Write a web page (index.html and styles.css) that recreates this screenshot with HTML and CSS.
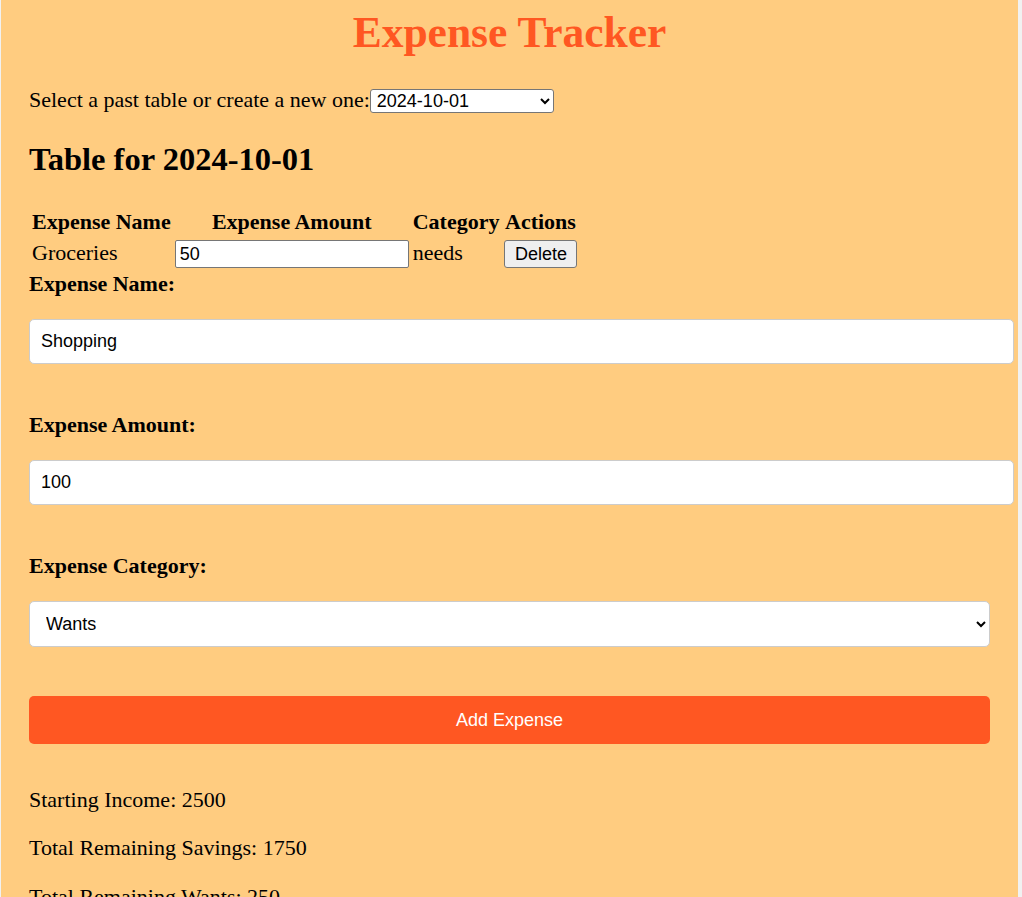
FILE: index.html
```html
<!DOCTYPE html>
<html lang="en">
<head>
<meta charset="utf-8">
<title>Expense Tracker</title>
<link rel="stylesheet" href="styles.css">
</head>
<body>
<h1 class="title">Expense Tracker</h1>
<div class="picker">
  <label class="picker-label" for="tableSelect">Select a past table or create a new one:</label>
  <select id="tableSelect" class="picker-select">
    <option>2024-10-01</option>
    <option>Create new table</option>
  </select>
</div>
<h2 class="table-title">Table for 2024-10-01</h2>
<table class="expense-table">
  <thead>
    <tr><th>Expense Name</th><th>Expense Amount</th><th>Category</th><th>Actions</th></tr>
  </thead>
  <tbody>
    <tr>
      <td>Groceries</td>
      <td><input class="amount-input" type="text" value="50"></td>
      <td>needs</td>
      <td><button class="delete-btn" type="button">Delete</button></td>
    </tr>
  </tbody>
</table>
<form class="expense-form">
  <label class="form-label" for="name">Expense Name:</label>
  <input class="form-input" id="name" type="text" value="Shopping">
  <label class="form-label" for="amount">Expense Amount:</label>
  <input class="form-input" id="amount" type="text" value="100">
  <label class="form-label" for="category">Expense Category:</label>
  <select class="form-select" id="category">
    <option>Wants</option>
    <option>Needs</option>
    <option>Savings</option>
  </select>
  <button class="add-btn" type="button">Add Expense</button>
</form>
<div class="summary">
  <p class="summary-line">Starting Income: 2500</p>
  <p class="summary-line">Total Remaining Savings: 1750</p>
  <p class="summary-line">Total Remaining Wants: 250</p>
</div>
</body>
</html>
```

FILE: styles.css
```css
html {
  background: #f1f1f1;
}

body {
  margin: 0 4px 0 1px;
  padding: 0 28px 40px;
  background: #ffcc80;
  font-family: "Liberation Serif", "Times New Roman", serif;
  font-size: 22px;
  line-height: 26px;
  color: #000;
}

.title {
  margin: 7.5px 0 0;
  font-size: 43.5px;
  line-height: 49px;
  font-weight: bold;
  text-align: center;
  color: #ff5722;
}

.picker {
  display: flex;
  align-items: baseline;
  margin-top: 30px;
}

.picker-select {
  width: 184px;
  height: 24px;
  padding: 0 2px;
  font-family: "Liberation Sans", Arial, sans-serif;
  font-size: 18px;
  color: #000;
  background: #fff;
  border: 1px solid #767676;
  border-radius: 3px;
}

.table-title {
  margin: 27px 0 0;
  font-size: 32.5px;
  line-height: 38px;
  font-weight: bold;
}

.expense-table {
  margin-top: 28px;
  border-spacing: 2px;
  font-size: 22px;
  line-height: 26px;
}

.expense-table th,
.expense-table td {
  padding: 1px;
  vertical-align: baseline;
}

.expense-table td {
  text-align: left;
  padding-top: 2px;
}

.amount-input {
  box-sizing: border-box;
  width: 234px;
  height: 28px;
  padding: 0 4px;
  font-family: "Liberation Sans", Arial, sans-serif;
  font-size: 18px;
  color: #000;
  background: #fff;
  border: 1px solid #767676;
  border-radius: 2px;
}

.delete-btn {
  box-sizing: border-box;
  height: 28px;
  width: 73px;
  padding: 0;
  margin-left: 1px;
  font-family: "Liberation Sans", Arial, sans-serif;
  font-size: 18px;
  color: #000;
  background: #efefef;
  border: 1px solid #767676;
  border-radius: 3px;
}

.expense-form {
  display: block;
  margin: 0;
}

.form-label {
  display: block;
  font-weight: bold;
  margin: 0 0 22px;
}

.form-input {
  display: block;
  width: 100%;
  height: 21px;
  padding: 11px;
  margin: 0 0 48px;
  font-family: "Liberation Sans", Arial, sans-serif;
  font-size: 18px;
  color: #000;
  background: #fff;
  border: 1px solid #cccccc;
  border-radius: 5px;
}

.form-select {
  display: block;
  box-sizing: border-box;
  width: 100%;
  height: 46px;
  padding: 0 12px;
  margin: 0 0 49px;
  font-family: "Liberation Sans", Arial, sans-serif;
  font-size: 18px;
  color: #000;
  background: #fff;
  border: 1px solid #cccccc;
  border-radius: 5px;
}

.add-btn {
  display: block;
  width: 100%;
  height: 48px;
  margin: 0 0 43px;
  font-family: "Liberation Sans", Arial, sans-serif;
  font-size: 18px;
  color: #fff;
  background: #ff5722;
  border: none;
  border-radius: 5px;
}

.summary-line {
  margin: 22px 0;
  line-height: 26.3px;
}
```
